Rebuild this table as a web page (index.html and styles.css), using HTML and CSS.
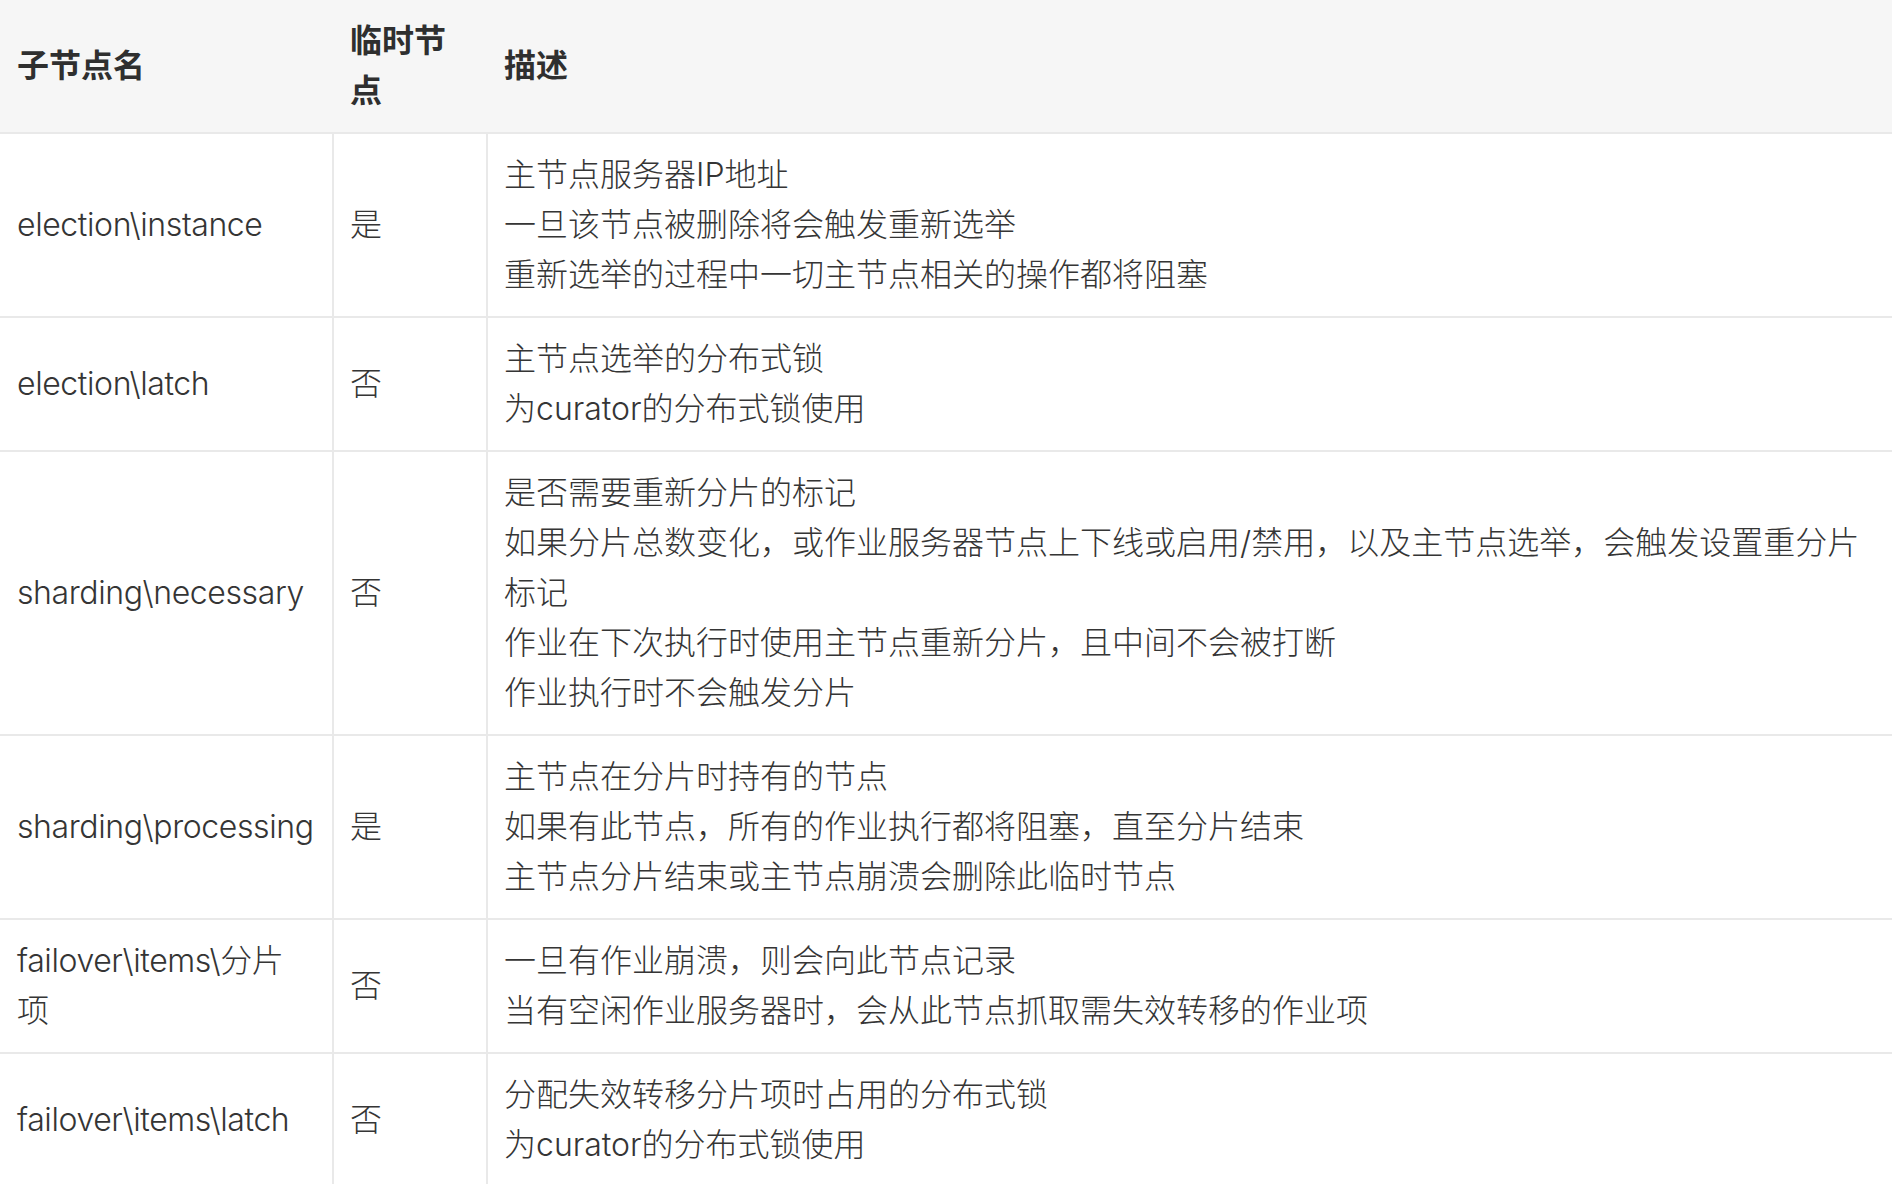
FILE: index.html
```html
<!DOCTYPE html>
<html lang="zh-CN">
<head>
<meta charset="utf-8">
<title>子节点</title>
<link rel="stylesheet" href="styles.css">
</head>
<body>
<table class="nodes">
  <colgroup>
    <col class="c-name">
    <col class="c-temp">
    <col class="c-desc">
  </colgroup>
  <thead>
    <tr>
      <th>子节点名</th>
      <th>临时节<br>点</th>
      <th>描述</th>
    </tr>
  </thead>
  <tbody>
    <tr>
      <td>election\instance</td>
      <td>是</td>
      <td>主节点服务器IP地址<br>一旦该节点被删除将会触发重新选举<br>重新选举的过程中一切主节点相关的操作都将阻塞</td>
    </tr>
    <tr>
      <td>election\latch</td>
      <td>否</td>
      <td>主节点选举的分布式锁<br>为curator的分布式锁使用</td>
    </tr>
    <tr>
      <td>sharding\necessary</td>
      <td>否</td>
      <td>是否需要重新分片的标记<br>如果分片总数变化，或作业服务器节点上下线或启用/禁用，以及主节点选举，会触发设置重分片标记<br>作业在下次执行时使用主节点重新分片，且中间不会被打断<br>作业执行时不会触发分片</td>
    </tr>
    <tr>
      <td>sharding\processing</td>
      <td>是</td>
      <td>主节点在分片时持有的节点<br>如果有此节点，所有的作业执行都将阻塞，直至分片结束<br>主节点分片结束或主节点崩溃会删除此临时节点</td>
    </tr>
    <tr>
      <td>failover\items\分片<br>项</td>
      <td>否</td>
      <td>一旦有作业崩溃，则会向此节点记录<br>当有空闲作业服务器时，会从此节点抓取需失效转移的作业项</td>
    </tr>
    <tr>
      <td>failover\items\latch</td>
      <td>否</td>
      <td>分配失效转移分片项时占用的分布式锁<br>为curator的分布式锁使用</td>
    </tr>
  </tbody>
</table>
</body>
</html>
```

FILE: styles.css
```css
html, body {
  margin: 0;
  padding: 0;
  background: #ffffff;
}

body {
  font-family: "Inter", "Noto Sans CJK SC", sans-serif;
  font-size: 32px;
  line-height: 50px;
  color: #353535;
  overflow: hidden;
}

.nodes {
  width: 100%;
  border-collapse: collapse;
  table-layout: fixed;
}

.c-name { width: 333px; }
.c-temp { width: 154px; }

.nodes th {
  background: #f6f6f6;
  font-weight: 700;
  text-align: left;
  padding: 16px 16px 16px 17px;
  border-bottom: 2px solid #e9e9e9;
  color: #2f2f2f;
  vertical-align: middle;
}

.nodes td {
  padding: 16px;
  border: 2px solid #e9e9e9;
  vertical-align: middle;
  font-weight: 300;
}

.nodes td:first-child {
  border-left: none;
  padding-left: 17px;
  padding-right: 8px;
  letter-spacing: -0.4px;
}

.nodes td:last-child {
  border-right: none;
}
```
